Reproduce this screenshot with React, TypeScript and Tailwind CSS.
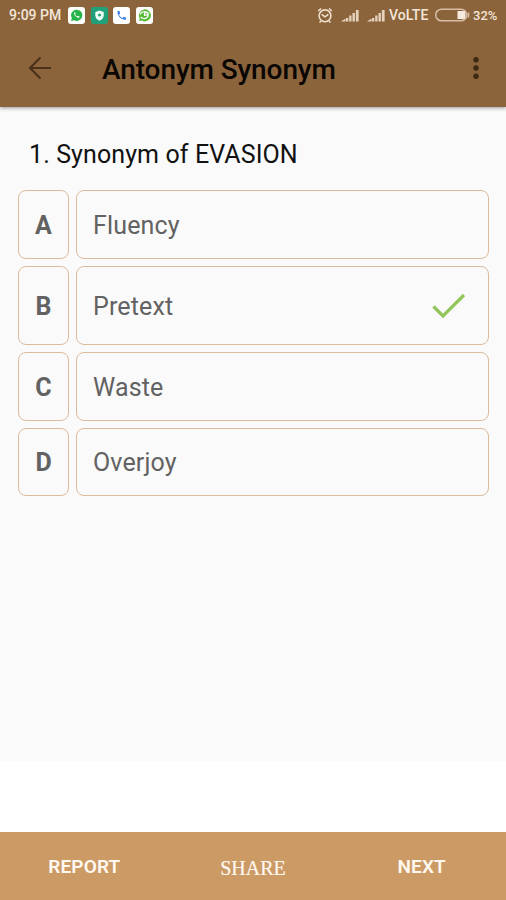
import { useState } from 'react'

type Option = { key: string; text: string; height: string }

const options: Option[] = [
  { key: 'A', text: 'Fluency', height: 'h-[69px]' },
  { key: 'B', text: 'Pretext', height: 'h-[79px]' },
  { key: 'C', text: 'Waste', height: 'h-[69px]' },
  { key: 'D', text: 'Overjoy', height: 'h-[68px]' },
]

function SignalIcon() {
  return (
    <svg width="18" height="13" viewBox="0 0 18 13" fill="#e6d3bf">
      <path d="M0 12.5L4.500 9.500v3zM5 9h2.300v3.500H5zM8.200 6.500h2.300v6H8.200zM11.500 4h2.400v8.500h-2.400zM14.900 1h2.700v11.500h-2.700z" />
    </svg>
  )
}

function StatusBar() {
  return (
    <div className="h-[30px] px-[9px] flex items-center text-[#f3e6d9] text-[14px] font-medium leading-none">
      <span className="w-[59px] whitespace-nowrap">9:09 PM</span>

      {/* 通知アイコン */}
      <div className="flex gap-[5.5px]">
        <svg width="17" height="17" viewBox="0 0 17 17">
          <rect width="17" height="17" rx="3" fill="#fdfdfb" />
          <path d="M3 14l.8-3a5.600 5.600 0 1 1 2.200 2.200z" fill="#25b34a" />
          <path d="M6.300 5.500c-.8 1 .2 2.700 1.300 3.800s2.800 2.100 3.700 1.200l.3-.9-1.600-.9-.9.7c-.9-.3-1.800-1.300-2.100-2.100l.7-.8-.7-1.500z" fill="#fff" />
        </svg>
        <svg width="17" height="17" viewBox="0 0 17 17">
          <rect width="17" height="17" rx="3" fill="#21a179" />
          <path d="M8.500 3.500l4.200 1.500v3.200c0 2.700-1.800 4.500-4.200 5.500-2.400-1-4.200-2.800-4.200-5.500V5z" fill="#f2fff9" />
          <circle cx="8.500" cy="8" r="1.500" fill="#21a179" />
        </svg>
        <svg width="17" height="17" viewBox="0 0 17 17">
          <rect width="17" height="17" rx="3" fill="#fff" />
          <path d="M4.500 4h2l.7 2.500L6 7.700c.8 1.600 1.800 2.600 3.400 3.400l1.200-1.200 2.400.6v2.200c-5 .4-8.800-3.700-8.500-8.700z" fill="#3f7fe8" />
        </svg>
        <svg width="17" height="17" viewBox="0 0 17 17">
          <rect width="17" height="17" rx="3" fill="#fff" />
          <path d="M3 14l.8-2.500a6 6 0 1 1 2 2z" fill="#55b936" />
          <path d="M4.300 7.500c.5-3 5.500-3.800 8-1.500H8.500v2.500l3.700-1c.2 3.800-5 5.800-7.400 2.300" stroke="#fff" strokeWidth="1.200" fill="none" />
        </svg>
      </div>

      <div className="ml-auto flex items-center">
        <svg width="16" height="17" viewBox="0 0 16 17" fill="none" stroke="#efe0d0" strokeWidth="1.600">
          <circle cx="8" cy="8.800" r="5.900" />
          <path d="M1.200 4L4 1.500M14.800 4L12 1.500M4.700 7.300L8 9.800l3.400-2.500M4 14l-1.500 1.500M12 14l1.500 1.500" />
        </svg>
        <span className="ml-2"><SignalIcon /></span>
        <span className="ml-2"><SignalIcon /></span>
        <span className="ml-1 w-[41px] whitespace-nowrap tracking-[0.1px]">VoLTE</span>
        <svg className="ml-[5px]" width="35" height="14" viewBox="0 0 35 14">
          <rect x=".7" y="1.200" width="31" height="11.600" rx="5.800" fill="none" stroke="#d6bda3" strokeWidth="1.500" />
          <path d="M22.500 3h6a2 2 0 0 1 2 2v4a2 2 0 0 1-2 2h-6z" fill="#f6eadf" />
          <path d="M32.500 4.500h1.800v5h-1.800z" fill="#d6bda3" />
        </svg>
        <span className="ml-[3px] w-[24px] whitespace-nowrap text-[13px]">32%</span>
      </div>
    </div>
  )
}

export default function App() {
  const [answer, setAnswer] = useState('B')

  return (
    <main className="h-[900px] w-[506px] flex flex-col bg-white font-['Roboto',sans-serif] overflow-hidden">

      {/* ヘッダー */}
      <header className="relative h-[107px] shrink-0 bg-[#8c643b] shadow-[0_1px_4px_rgba(0,0,0,0.4)]">
        <StatusBar />
        <div className="h-[76px] flex items-center pl-7 pr-[18px]">
          <button aria-label="Back">
            <svg width="24" height="24" viewBox="0 0 24 24" fill="none" stroke="#4b3119" strokeWidth="2.200">
              <path d="M23 12H2.500M12.500 1.500L2 12l10.500 10.500" />
            </svg>
          </button>
          <h1 className="ml-[50px] pt-[3px] text-[28px] font-medium tracking-[-0.1px] text-[#090603] whitespace-nowrap">Antonym Synonym</h1>
          <button aria-label="More" className="ml-auto">
            <svg width="24" height="24" viewBox="0 0 24 24" fill="#3d2813">
              <circle cx="12" cy="3.800" r="2.700" />
              <circle cx="12" cy="12" r="2.700" />
              <circle cx="12" cy="20.300" r="2.700" />
            </svg>
          </button>
        </div>
      </header>

      {/* 問題 */}
      <section className="h-[654px] shrink-0 bg-[#fafafa] pl-[18px] pr-[17px] pt-8">
        <p className="h-[51px] pl-[11px] text-[25px] leading-[32px] tracking-[0.1px] text-[#111] whitespace-nowrap">1. Synonym of EVASION</p>
        <div className="flex flex-col gap-[7px]">
          {options.map(o => (
            <button key={o.key} onClick={() => setAnswer(o.key)} className={`${o.height} flex gap-[7px] text-[25px] text-[#626262]`}>
              <span className="h-full w-[51px] flex items-center justify-center rounded-lg border border-[#dcbb9d] pt-[2px] font-bold">
                {o.key}
              </span>
              <span className="h-full flex-1 flex items-center justify-between rounded-lg border border-[#dcbb9d] pt-[2px] pl-4 pr-[22px] tracking-[0.15px]">
                {o.text}
                {answer === o.key && (
                  <svg className="-mt-[2px]" width="34" height="26" viewBox="0 0 34 26" fill="none" stroke="#93c65a" strokeWidth="3.200">
                    <path d="M1.500 13.500l9.500 9.500L32 2" />
                  </svg>
                )}
              </span>
            </button>
          ))}
        </div>
      </section>

      {/* フッター */}
      <footer className="mt-auto h-[68px] pt-[3px] grid grid-cols-3 bg-[#cc9a65] text-[19px] font-semibold tracking-[0.15px] text-[#fff8f0]">
        <button>REPORT</button>
        <button className="font-['Liberation_Serif',serif] text-[20px] font-normal tracking-normal [-webkit-text-stroke:0.2px_#fff8f0]">SHARE</button>
        <button>NEXT</button>
      </footer>
    </main>
  )
}
